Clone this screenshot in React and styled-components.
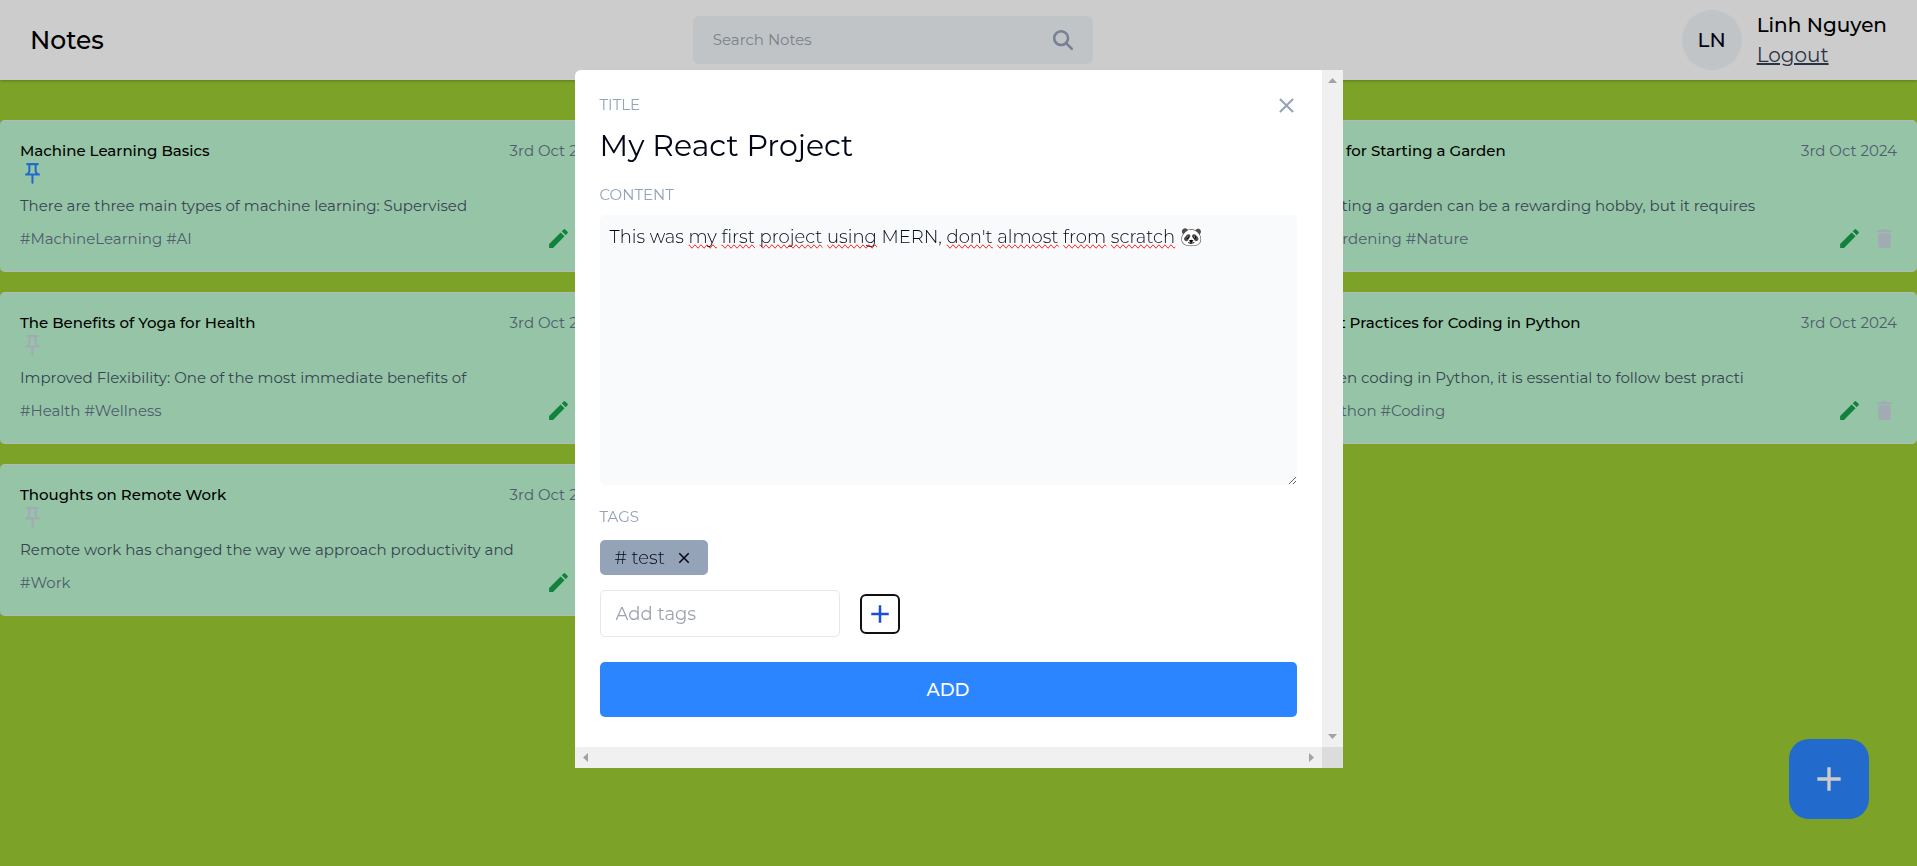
import React, { useState } from "react";
import styled, { createGlobalStyle } from "styled-components";
import { MdAdd, MdClose, MdCreate, MdDelete, MdOutlinePushPin } from "react-icons/md";
import { FaMagnifyingGlass } from "react-icons/fa6";

const GlobalStyle = createGlobalStyle`
  *, *::before, *::after { box-sizing: border-box; }
  body {
    margin: 0;
    min-height: 100vh;
    background: #9ccc33;
    color: #000;
    font-family: Montserrat, Inter, sans-serif;
    font-size: 15px;
    line-height: 20px;
  }
  button, input, textarea { font: inherit; color: inherit; }
  button { padding: 0; border: 0; background: none; cursor: pointer; }
  h1, h2, h3, p { margin: 0; }
  svg { display: block; }
`;

const Header = styled.header`
  display: flex;
  align-items: center;
  justify-content: space-between;
  padding: 10px 30px;
  background: #fff;
  box-shadow: 0 1px 3px rgba(0, 0, 0, 0.25);
`;

const Brand = styled.h1`
  font-size: 25px;
  font-weight: 500;
  line-height: 35px;
`;

const SearchBar = styled.form`
  display: flex;
  align-items: center;
  width: 400px;
  height: 48px;
  padding: 0 20px;
  border-radius: 6px;
  background: #f1f5f9;
`;

const SearchInput = styled.input`
  flex: 1;
  min-width: 0;
  padding: 0;
  border: 0;
  outline: none;
  background: transparent;
  &::placeholder { color: #9ca3af; }
`;

const SearchButton = styled.button`
  color: #94a3b8;
  font-size: 20px;
`;

const Profile = styled.div`
  display: flex;
  align-items: center;
  gap: 15px;
  font-size: 20px;
  line-height: 30px;
`;

const Avatar = styled.div`
  display: grid;
  place-items: center;
  width: 60px;
  height: 60px;
  border-radius: 50%;
  background: #f1f5f9;
  color: #020617;
  font-weight: 500;
`;

const UserName = styled.p`
  font-weight: 500;
`;

const LogoutLink = styled.a`
  display: block;
  color: #334155;
  text-decoration: underline;
`;

const NoteGrid = styled.main`
  display: grid;
  grid-template-columns: repeat(3, minmax(0, 1fr));
  gap: 20px;
  margin-top: 40px;
`;

const Card = styled.article`
  min-height: 152px;
  padding: 20px;
  border: solid #e5e7eb;
  border-width: 1px 0;
  border-radius: 5px;
  background: #bbf7d0;
`;

const CardHead = styled.div`
  display: flex;
  justify-content: space-between;
`;

const CardTitle = styled.h2`
  font-size: 15px;
  font-weight: 500;
`;

const CardDate = styled.time`
  color: #64748b;
`;

const CardBody = styled.p`
  margin: 10px 0;
  color: #475569;
`;

const CardFoot = styled.div`
  display: flex;
  align-items: center;
  gap: 10px;
`;

const CardTags = styled.p`
  flex: 1;
  color: #64748b;
`;

const tones = { pinned: "#2b85ff", muted: "#cbd5e1", edit: "#16a34a" };

const IconButton = styled.button`
  display: block;
  color: ${({ $tone }) => tones[$tone]};
  font-size: 25px;
`;

const FloatingAdd = styled.button`
  position: fixed;
  right: 48px;
  bottom: 47px;
  display: grid;
  place-items: center;
  width: 80px;
  height: 80px;
  border-radius: 20px;
  background: #2b85ff;
  color: #fff;
  font-size: 40px;
`;

const Overlay = styled.div`
  position: fixed;
  inset: 0;
  overflow: auto;
  background: rgba(0, 0, 0, 0.2);
`;

const Modal = styled.section`
  display: grid;
  grid-template-columns: minmax(0, 1fr) 21px;
  width: 768px;
  max-width: 100%;
  margin: 70px auto;
  overflow: hidden;
  border-radius: 6px 0 0 0;
  background: #fff;
`;

const ModalForm = styled.form`
  position: relative;
  display: flex;
  flex-direction: column;
  padding: 25px 25px 30px;
`;

const CloseButton = styled.button`
  position: absolute;
  top: 10px;
  right: 10px;
  display: grid;
  place-items: center;
  width: 50px;
  height: 50px;
  color: #94a3b8;
  font-size: 25px;
`;

const FieldLabel = styled.label`
  color: #94a3b8;
`;

const TitleInput = styled.input`
  height: 40px;
  margin: 10px 0 20px;
  padding: 0;
  border: 0;
  outline: none;
  background: transparent;
  color: #020617;
  font-size: 30px;
`;

const Editor = styled.div`
  display: grid;
  margin: 10px 0 22px;
  border-radius: 5px;
  background: #f8fafc;
  font-size: 18px;
  font-weight: 300;
  line-height: 25px;
`;

const SpellingLayer = styled.div`
  grid-area: 1 / 1;
  padding: 10px;
  color: transparent;
  white-space: pre-wrap;
`;

const Misspelled = styled.span`
  text-decoration-line: spelling-error;
`;

const ContentArea = styled.textarea`
  grid-area: 1 / 1;
  width: 100%;
  height: 270px;
  padding: 10px;
  border: 0;
  outline: none;
  background: transparent;
  color: #020617;
  resize: vertical;
`;

const TagList = styled.ul`
  display: flex;
  gap: 10px;
  margin: 13px 0 15px;
  padding: 0;
  list-style: none;
`;

const Tag = styled.li`
  display: flex;
  align-items: center;
  gap: 10px;
  height: 35px;
  padding: 0 15px;
  border-radius: 5px;
  background: #94a3b8;
  color: #020617;
  font-size: 18px;
  font-weight: 300;
`;

const TagRemove = styled.button`
  font-size: 18px;
`;

const TagEntry = styled.div`
  display: flex;
  align-items: center;
  gap: 20px;
  margin-bottom: 25px;
`;

const TagInput = styled.input`
  width: 240px;
  height: 47px;
  padding: 0 15px;
  border: 1px solid #e5e7eb;
  border-radius: 5px;
  outline: none;
  background: transparent;
  font-size: 18px;
  &::placeholder { color: #9ca3af; }
`;

const TagAddButton = styled.button`
  display: grid;
  place-items: center;
  width: 40px;
  height: 40px;
  border: 2px solid #101010;
  border-radius: 6px;
  color: #1d4ed8;
  font-size: 30px;
`;

const SubmitButton = styled.button`
  height: 55px;
  border-radius: 5px;
  background: #2b85ff;
  color: #fff;
  font-size: 18px;
  font-weight: 500;
`;

const ScrollTrack = styled.div`
  display: flex;
  flex-direction: ${({ $vertical }) => ($vertical ? "column" : "row")};
  justify-content: space-between;
  background: #f0f0f0;
`;

const ScrollArrow = styled.button`
  display: grid;
  place-items: center;
  width: 21px;
  height: 21px;
`;

const ScrollCorner = styled.div`
  background: #dcdcdc;
`;

const arrowPaths = {
  up: "M0 7 L4.5 2 L9 7 Z",
  down: "M0 2 L4.5 7 L9 2 Z",
  left: "M7 0 L2 4.5 L7 9 Z",
  right: "M2 0 L7 4.5 L2 9 Z",
};

function Arrow({ direction }) {
  return (
    <ScrollArrow type="button" tabIndex={-1} aria-label={`Scroll ${direction}`}>
      <svg width="9" height="9" viewBox="0 0 9 9" fill="#a3a3a3">
        <path d={arrowPaths[direction]} />
      </svg>
    </ScrollArrow>
  );
}

const notes = [
  { id: 1, title: "Machine Learning Basics", body: "There are three main types of machine learning: Supervised", tags: "#MachineLearning #AI", pinned: true },
  { id: 2 },
  { id: 3, title: "Tips for Starting a Garden", body: "Starting a garden can be a rewarding hobby, but it requires", tags: "#Gardening #Nature" },
  { id: 4, title: "The Benefits of Yoga for Health", body: "Improved Flexibility: One of the most immediate benefits of", tags: "#Health #Wellness" },
  { id: 5 },
  { id: 6, title: "Best Practices for Coding in Python", body: "When coding in Python, it is essential to follow best practi", tags: "#Python #Coding" },
  { id: 7, title: "Thoughts on Remote Work", body: "Remote work has changed the way we approach productivity and", tags: "#Work" },
];

function NoteCard({ note }) {
  if (!note.title) return <Card />;
  return (
    <Card>
      <CardHead>
        <CardTitle>{note.title}</CardTitle>
        <CardDate dateTime="2024-10-03">3rd Oct 2024</CardDate>
      </CardHead>
      <IconButton $tone={note.pinned ? "pinned" : "muted"} aria-label="Pin note">
        <MdOutlinePushPin />
      </IconButton>
      <CardBody>{note.body}</CardBody>
      <CardFoot>
        <CardTags>{note.tags}</CardTags>
        <IconButton $tone="edit" aria-label="Edit note"><MdCreate /></IconButton>
        <IconButton $tone="muted" aria-label="Delete note"><MdDelete /></IconButton>
      </CardFoot>
    </Card>
  );
}

const flagged = new Set(["my", "first", "project", "using", "don't", "almost", "from", "scratch"]);

function ContentEditor({ id, value, onChange }) {
  return (
    <Editor>
      <SpellingLayer aria-hidden="true">
        {value.split(/(\s+)/).map((part, i) =>
          flagged.has(part) ? <Misspelled key={i}>{part}</Misspelled> : part
        )}
      </SpellingLayer>
      <ContentArea id={id} spellCheck={false} value={value} onChange={(e) => onChange(e.target.value)} />
    </Editor>
  );
}

function AddNoteModal() {
  const [title, setTitle] = useState("My React Project");
  const [content, setContent] = useState(
    "This was my first project using MERN, don't almost from scratch 🐼"
  );
  return (
    <Modal role="dialog" aria-label="Add note">
      <ModalForm onSubmit={(e) => e.preventDefault()}>
        <CloseButton type="button" aria-label="Close"><MdClose /></CloseButton>
        <FieldLabel htmlFor="note-title">TITLE</FieldLabel>
        <TitleInput id="note-title" value={title} onChange={(e) => setTitle(e.target.value)} />
        <FieldLabel htmlFor="note-content">CONTENT</FieldLabel>
        <ContentEditor id="note-content" value={content} onChange={setContent} />
        <FieldLabel htmlFor="note-tag">TAGS</FieldLabel>
        <TagList>
          <Tag>
            # test
            <TagRemove type="button" aria-label="Remove tag"><MdClose /></TagRemove>
          </Tag>
        </TagList>
        <TagEntry>
          <TagInput id="note-tag" placeholder="Add tags" />
          <TagAddButton type="button" aria-label="Add tag"><MdAdd /></TagAddButton>
        </TagEntry>
        <SubmitButton type="submit">ADD</SubmitButton>
      </ModalForm>
      <ScrollTrack $vertical>
        <Arrow direction="up" />
        <Arrow direction="down" />
      </ScrollTrack>
      <ScrollTrack>
        <Arrow direction="left" />
        <Arrow direction="right" />
      </ScrollTrack>
      <ScrollCorner />
    </Modal>
  );
}

export default function App() {
  return (
    <>
      <GlobalStyle />
      <Header>
        <Brand>Notes</Brand>
        <SearchBar role="search" onSubmit={(e) => e.preventDefault()}>
          <SearchInput type="text" aria-label="Search Notes" placeholder="Search Notes" />
          <SearchButton aria-label="Search"><FaMagnifyingGlass /></SearchButton>
        </SearchBar>
        <Profile>
          <Avatar>LN</Avatar>
          <div>
            <UserName>Linh Nguyen</UserName>
            <LogoutLink href="#logout">Logout</LogoutLink>
          </div>
        </Profile>
      </Header>
      <NoteGrid>
        {notes.map((note) => <NoteCard key={note.id} note={note} />)}
      </NoteGrid>
      <FloatingAdd aria-label="Add note"><MdAdd /></FloatingAdd>
      <Overlay>
        <AddNoteModal />
      </Overlay>
    </>
  );
}
